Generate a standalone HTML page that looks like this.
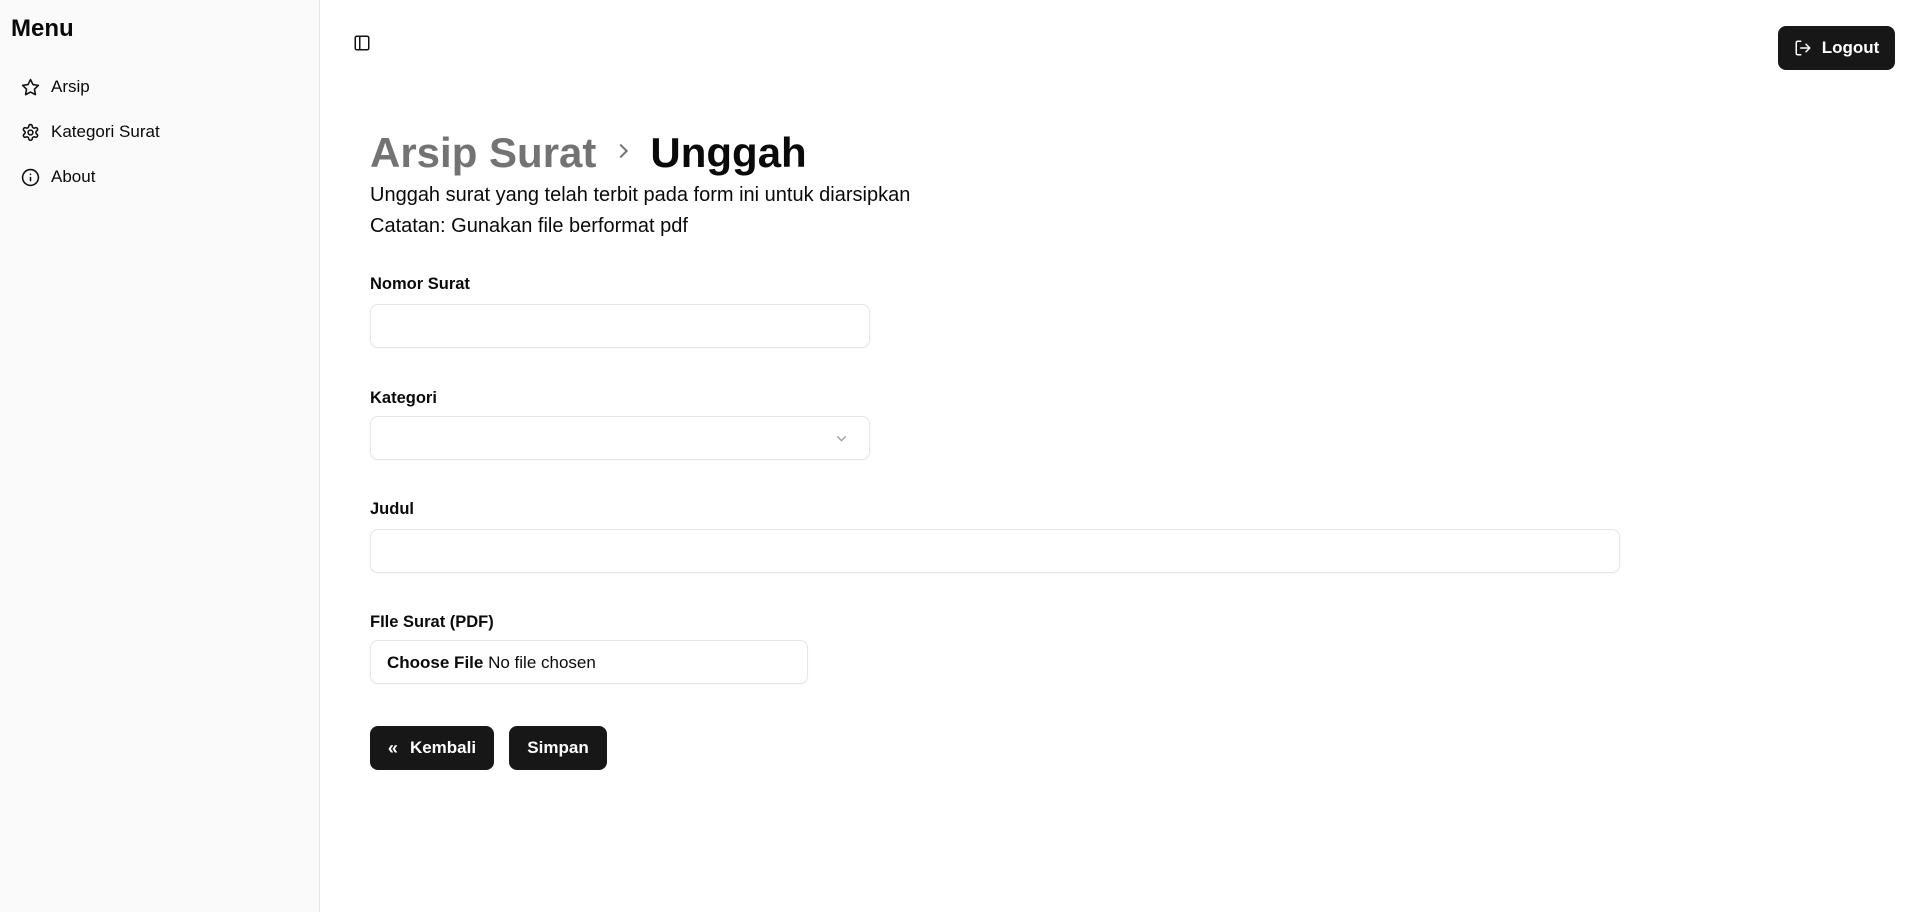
<!DOCTYPE html>
<html><head><meta charset="utf-8"><style>
*{box-sizing:border-box;margin:0;padding:0}
body{width:1920px;height:912px;font-family:"Liberation Sans",sans-serif;color:#0a0a0a;background:#fff;position:relative;overflow:hidden}
.side{position:absolute;left:0;top:0;width:320px;height:912px;background:#fafafa;border-right:1px solid #e5e5e5}
.side h2{position:absolute;left:11px;top:15px;font-size:24px;font-weight:700}
.item{position:absolute;left:21px;display:flex;align-items:center;font-size:17px;height:24px}
.item svg{width:19px;height:19px;margin-right:11px}
.abs{position:absolute}
.lbl{position:absolute;left:370px;font-size:16.5px;font-weight:700}
.inp{position:absolute;left:370px;height:44px;border:1px solid #e5e5e5;border-radius:8px;background:#fff;box-shadow:0 1px 2px rgba(0,0,0,.04)}
.btn{position:absolute;background:#171717;color:#fff;border-radius:8px;font-weight:700;font-size:17px;display:flex;align-items:center;justify-content:center}
</style></head><body>
<div class="side">
<h2>Menu</h2>
<div class="item" style="top:75px"><svg viewBox="0 0 24 24" fill="none" stroke="#111" stroke-width="2" stroke-linejoin="round"><path d="M12 2l3.1 6.3 6.9 1-5 4.9 1.2 6.8L12 17.8 5.8 21l1.2-6.8-5-4.9 6.9-1z"/></svg>Arsip</div>
<div class="item" style="top:120px"><svg viewBox="0 0 24 24" fill="none" stroke="#111" stroke-width="2" stroke-linejoin="round"><path d="M12.2 2h-.4a2 2 0 0 0-2 2v.2a2 2 0 0 1-1 1.7l-.4.3a2 2 0 0 1-2 0l-.2-.1a2 2 0 0 0-2.7.7l-.2.4a2 2 0 0 0 .7 2.7l.2.1a2 2 0 0 1 1 1.7v.5a2 2 0 0 1-1 1.7l-.2.1a2 2 0 0 0-.7 2.7l.2.4a2 2 0 0 0 2.7.7l.2-.1a2 2 0 0 1 2 0l.4.3a2 2 0 0 1 1 1.7v.2a2 2 0 0 0 2 2h.4a2 2 0 0 0 2-2v-.2a2 2 0 0 1 1-1.7l.4-.3a2 2 0 0 1 2 0l.2.1a2 2 0 0 0 2.7-.7l.2-.4a2 2 0 0 0-.7-2.7l-.2-.1a2 2 0 0 1-1-1.7v-.5a2 2 0 0 1 1-1.7l.2-.1a2 2 0 0 0 .7-2.7l-.2-.4a2 2 0 0 0-2.7-.7l-.2.1a2 2 0 0 1-2 0l-.4-.3a2 2 0 0 1-1-1.7V4a2 2 0 0 0-2-2z"/><circle cx="12" cy="12" r="3"/></svg>Kategori Surat</div>
<div class="item" style="top:165px"><svg viewBox="0 0 24 24" fill="none" stroke="#111" stroke-width="2" stroke-linecap="round"><circle cx="12" cy="12" r="10"/><path d="M12 16v-4M12 8h.01"/></svg>About</div>
</div>
<svg class="abs" style="left:353px;top:34px" width="18" height="18" viewBox="0 0 24 24" fill="none" stroke="#111" stroke-width="2"><rect x="3" y="3" width="18" height="18" rx="2"/><path d="M9 3v18"/></svg>
<div class="btn" style="left:1778px;top:26px;width:117px;height:44px"><svg width="18" height="18" viewBox="0 0 24 24" fill="none" stroke="#fff" stroke-width="2" stroke-linecap="round" stroke-linejoin="round" style="margin-right:10px"><path d="M9 21H5a2 2 0 0 1-2-2V5a2 2 0 0 1 2-2h4"/><path d="M16 17l5-5-5-5M21 12H9"/></svg>Logout</div>
<div class="abs" style="left:370px;top:126px;font-size:42px;font-weight:700;line-height:54px;white-space:nowrap"><span style="color:#737373">Arsip Surat</span><svg width="22" height="22" viewBox="0 0 24 24" fill="none" stroke="#737373" stroke-width="2.2" style="margin:0 16px 10px 16px;vertical-align:middle"><path d="M9 5l7 7-7 7"/></svg><span>Unggah</span></div>
<div class="abs" style="left:370px;top:180px;font-size:20px;line-height:31px">Unggah surat yang telah terbit pada form ini untuk diarsipkan<br>Catatan: Gunakan file berformat pdf</div>
<div class="lbl" style="top:275px">Nomor Surat</div>
<div class="inp" style="top:304px;width:500px"></div>
<div class="lbl" style="top:389px">Kategori</div>
<div class="inp" style="top:416px;width:500px"><svg class="abs" style="left:462px;top:13px" width="17" height="17" viewBox="0 0 24 24" fill="none" stroke="#999" stroke-width="1.8"><path d="M6 9l6 6 6-6"/></svg></div>
<div class="lbl" style="top:500px">Judul</div>
<div class="inp" style="top:529px;width:1250px"></div>
<div class="lbl" style="top:613px">FIle Surat (PDF)</div>
<div class="inp" style="top:640px;width:438px;font-size:17px;line-height:44px;padding-left:16px"><b>Choose File</b> No file chosen</div>
<div class="btn" style="left:370px;top:726px;width:124px;height:44px"><span style="margin-right:12px;font-size:18px">«</span>Kembali</div>
<div class="btn" style="left:509px;top:726px;width:98px;height:44px">Simpan</div>
</body></html>
